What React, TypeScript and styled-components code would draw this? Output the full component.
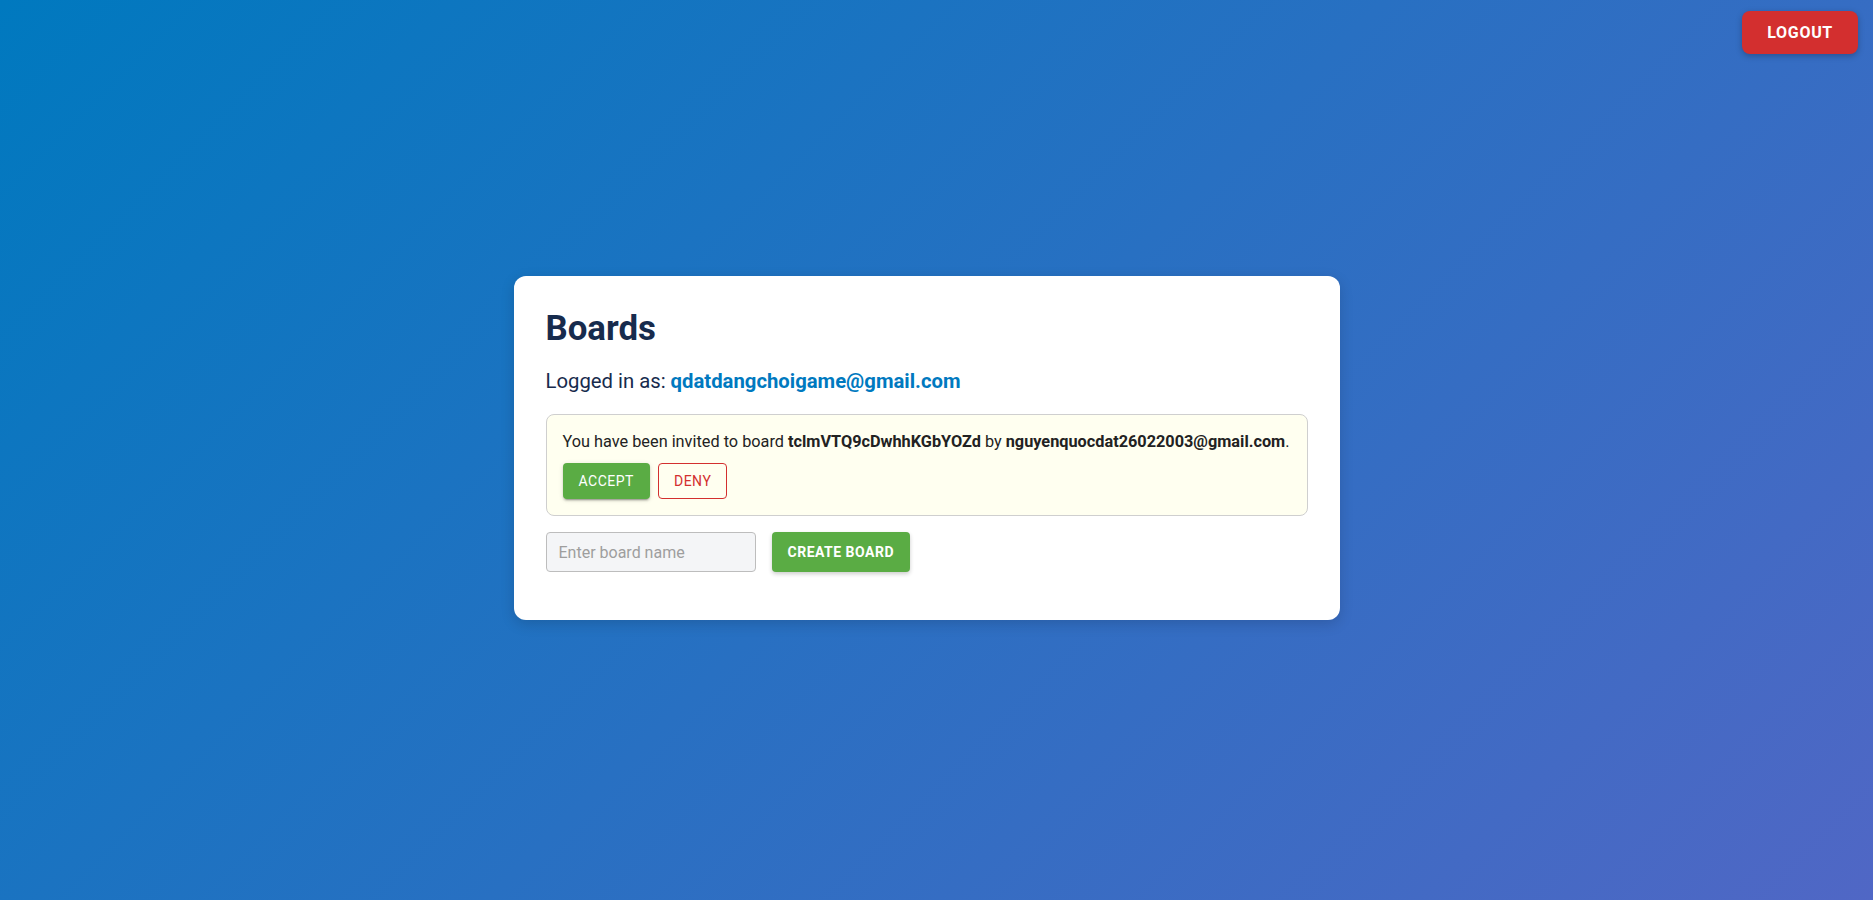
import React, { useState } from "react";
import styled, { createGlobalStyle } from "styled-components";

const GlobalStyle = createGlobalStyle`
  * {
    box-sizing: border-box;
  }

  body {
    margin: 0;
    font-family: Roboto, "Liberation Sans", Arial, sans-serif;
  }
`;

const Page = styled.div`
  min-height: 100vh;
  display: flex;
  flex-direction: column;
  background: linear-gradient(135deg, #0079bf, #5067c5);
`;

const TopBar = styled.header`
  display: flex;
  justify-content: flex-end;
  padding: 11px 15px 0 0;
`;

const LogoutButton = styled.button`
  height: 43px;
  padding: 0 25px;
  border: none;
  border-radius: 8px;
  background: #d32f2f;
  color: #fff;
  font-family: inherit;
  font-size: 16px;
  font-weight: 700;
  letter-spacing: 0.7px;
  text-transform: uppercase;
  box-shadow: 0 2px 6px rgba(0, 0, 0, 0.25);
  cursor: pointer;
`;

const Main = styled.main`
  flex: 1;
  display: flex;
  align-items: center;
  justify-content: center;
  padding: 0 20px 58px 0;
`;

const Card = styled.section`
  width: 826px;
  padding: 32px;
  background: #fff;
  border-radius: 12px;
  box-shadow: 0 4px 14px rgba(0, 0, 0, 0.15);
`;

const Title = styled.h1`
  margin: 0 0 22px;
  font-size: 34.8px;
  line-height: 40px;
  font-weight: 700;
  color: #172b4d;
`;

const UserLine = styled.p`
  margin: 0 0 20px;
  font-size: 20.3px;
  line-height: 23.5px;
  color: #172b4d;
`;

const Email = styled.span`
  font-weight: 700;
  color: #0079bf;
`;

const InviteBox = styled.div`
  padding: 16px;
  border: 1px solid #cfcfcf;
  border-radius: 8px;
  background: #fffff0;
`;

const InviteText = styled.p`
  margin: 0;
  font-size: 16.3px;
  line-height: 22px;
  color: #222;

  & b {
    font-weight: 700;
  }
`;

const InviteActions = styled.div`
  display: flex;
  gap: 8px;
  margin-top: 10px;
`;

const ActionButton = styled.button<{ $variant: "accept" | "deny" }>`
  height: 36.5px;
  padding: ${(p) => (p.$variant === "accept" ? "0 16px" : "0 15px")};
  border-radius: 4px;
  border: ${(p) => (p.$variant === "accept" ? "none" : "1px solid #d32f2f")};
  background: ${(p) => (p.$variant === "accept" ? "#5aac44" : "transparent")};
  color: ${(p) => (p.$variant === "accept" ? "#fff" : "#d32f2f")};
  font-family: inherit;
  font-size: 14px;
  font-weight: 400;
  letter-spacing: 0.5px;
  text-transform: uppercase;
  box-shadow: ${(p) =>
    p.$variant === "accept"
      ? "0 3px 1px -2px rgba(0,0,0,0.2), 0 2px 2px 0 rgba(0,0,0,0.14), 0 1px 5px 0 rgba(0,0,0,0.12)"
      : "none"};
  cursor: pointer;
`;

const CreateRow = styled.form`
  display: flex;
  gap: 16px;
  margin: 16px 0;
`;

const BoardInput = styled.input`
  width: 210px;
  height: 39.5px;
  padding: 0 12px;
  border: 1px solid #bdbdbd;
  border-radius: 4px;
  background: #f4f5f7;
  font-family: inherit;
  font-size: 16px;
  color: #172b4d;
  outline: none;

  &::placeholder {
    color: #9e9e9e;
  }
`;

const CreateButton = styled.button`
  height: 39.5px;
  padding: 0 16px;
  border: none;
  border-radius: 4px;
  background: #5aac44;
  color: #fff;
  font-family: inherit;
  font-size: 14px;
  font-weight: 700;
  letter-spacing: 0.5px;
  text-transform: uppercase;
  box-shadow: 0 2px 4px rgba(0, 0, 0, 0.2);
  cursor: pointer;
`;

export default function App() {
  const [boardName, setBoardName] = useState("");
  const [invited, setInvited] = useState(true);

  return (
    <Page>
      <GlobalStyle />
      <TopBar>
        <LogoutButton>Logout</LogoutButton>
      </TopBar>
      <Main>
        <Card>
          <Title>Boards</Title>
          <UserLine>
            Logged in as: <Email>qdatdangchoigame@gmail.com</Email>
          </UserLine>
          {invited && (
            <InviteBox>
              <InviteText>
                You have been invited to board <b>tclmVTQ9cDwhhKGbYOZd</b> by{" "}
                <b>nguyenquocdat26022003@gmail.com</b>.
              </InviteText>
              <InviteActions>
                <ActionButton $variant="accept" onClick={() => setInvited(false)}>
                  Accept
                </ActionButton>
                <ActionButton $variant="deny" onClick={() => setInvited(false)}>
                  Deny
                </ActionButton>
              </InviteActions>
            </InviteBox>
          )}
          <CreateRow onSubmit={(e) => e.preventDefault()}>
            <BoardInput
              placeholder="Enter board name"
              value={boardName}
              onChange={(e) => setBoardName(e.target.value)}
            />
            <CreateButton type="submit">Create Board</CreateButton>
          </CreateRow>
        </Card>
      </Main>
    </Page>
  );
}
